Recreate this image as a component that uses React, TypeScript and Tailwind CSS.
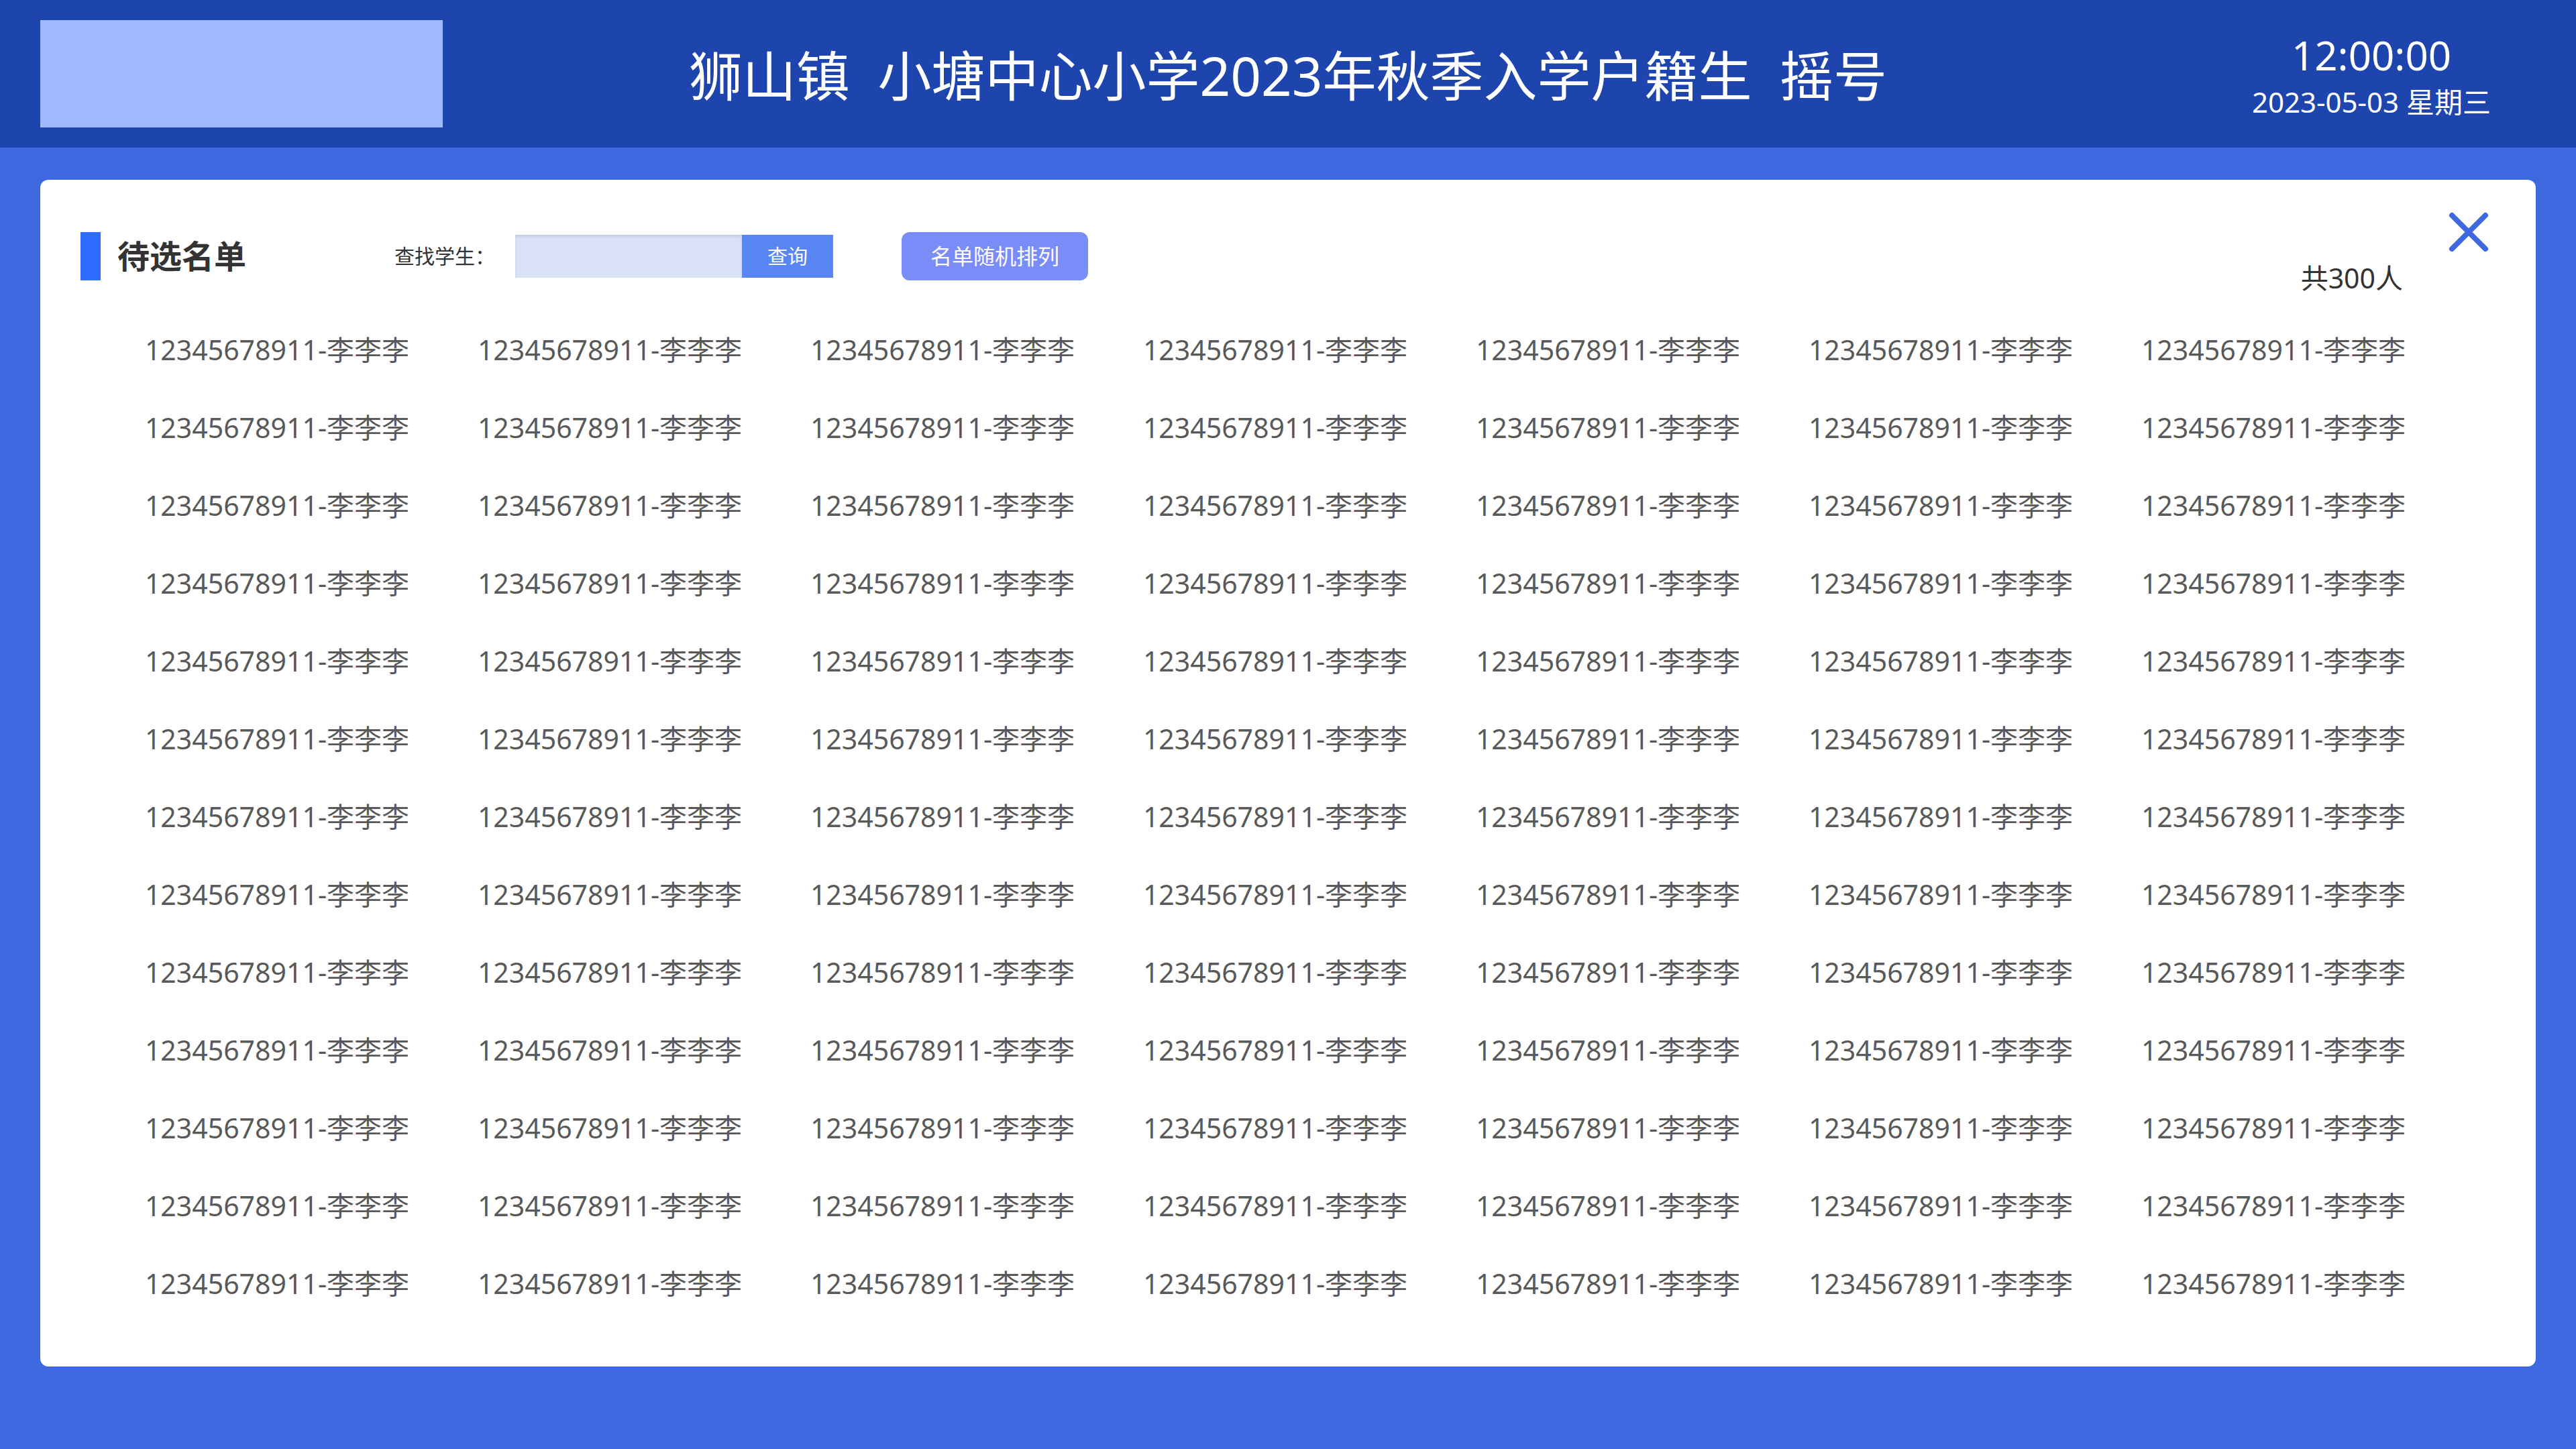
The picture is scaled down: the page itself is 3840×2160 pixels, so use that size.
import React from "react";

const FONT = { fontFamily: '"Noto Sans", "Noto Sans CJK SC", sans-serif' };

export default function App() {
  const items = Array.from({ length: 91 }, () => "12345678911-李李李");
  return (
    <div className="min-h-screen bg-[#3d68e0]" style={FONT}>
      <header className="grid grid-cols-[1fr_auto_1fr] items-center h-[220px] bg-[#1e45ae]">
        <div className="pl-[60px]">
          <div className="w-[600px] h-[160px] bg-[#9eb9fe]" />
        </div>
        <h1 className="text-white text-[80px] leading-none font-normal whitespace-pre pt-[4px]">
          {"狮山镇  小塘中心小学2023年秋季入学户籍生  摇号"}
        </h1>
        <div className="flex justify-end pr-[105px]">
          <div className="w-[400px] flex flex-col items-center text-white pt-[4px]">
            <div className="text-[60px] leading-none">12:00:00</div>
            <div className="text-[42px] leading-none mt-[19px]">2023-05-03 星期三</div>
          </div>
        </div>
      </header>

      <main className="px-[60px] pt-[48px]">
        <section className="relative bg-white rounded-[12px] px-[60px] pt-[78px] pb-[65px]">
          <div className="flex items-center h-[72px]">
            <div className="w-[30px] h-[72px] bg-[#2f6bff]" />
            <div className="ml-[25px] text-[48px] font-bold text-[#333333] leading-none">待选名单</div>
            <div className="ml-[221px] text-[30px] text-[#333333] leading-none">查找学生：</div>
            <div className="ml-[30px] flex h-[64px]">
              <div className="w-[338px] h-full bg-[#d9e1f6] shadow-[inset_0_3px_4px_rgba(0,0,0,0.08)]" />
              <button className="w-[136px] h-full bg-[#5886f2] text-white text-[30px] leading-none">查询</button>
            </div>
            <button className="ml-[102px] w-[278px] h-[72px] rounded-[12px] bg-[#7a8cf8] text-white text-[32px] leading-none">
              名单随机排列
            </button>
            <div className="ml-auto mr-[138px] self-start mt-[48px] text-[41px] leading-none text-[#333333]">共300人</div>
          </div>

          <div className="ml-[45px] mt-[46px] grid grid-cols-[repeat(7,496px)]">
            {items.map((t, i) => (
              <div key={i} className="h-[116px] flex items-center justify-center text-[41px] text-[#595959] whitespace-nowrap">
                {t}
              </div>
            ))}
          </div>

          <svg className="absolute top-[48px] right-[70px]" width="60" height="60" viewBox="0 0 60 60" fill="none">
            <path d="M5 5 L55 55 M55 5 L5 55" stroke="#3d68e0" strokeWidth="8" strokeLinecap="round" />
          </svg>
        </section>
      </main>
    </div>
  );
}
